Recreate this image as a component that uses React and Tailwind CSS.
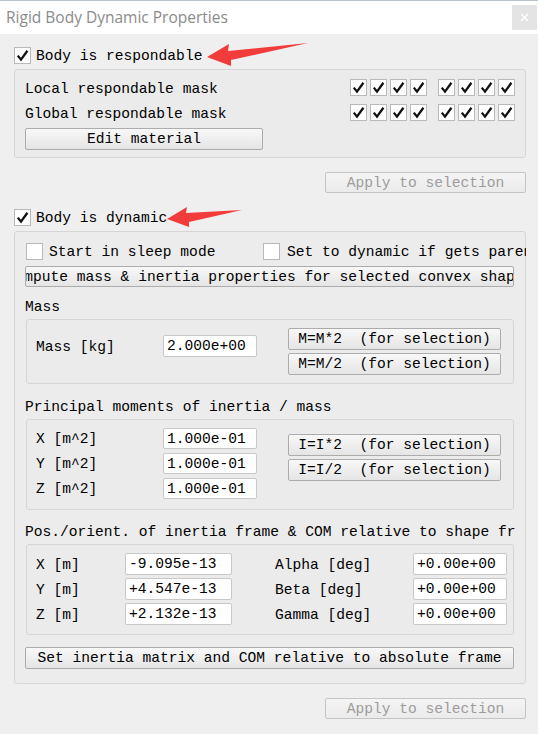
import React from "react";

function Check({ checked = true }) {
  return (
    <span className="w-[17px] h-[17px] bg-white border border-[#b9b9b9] flex items-center justify-center shrink-0">
      {checked && (
        <svg width="13" height="13" viewBox="0 0 13 13">
          <path d="M1.8 6.6 L5 10.6 L11.4 1.8" fill="none" stroke="#111" strokeWidth="2.3" strokeLinejoin="miter" strokeLinecap="butt" />
        </svg>
      )}
    </span>
  );
}

function Btn({ children, className = "", disabled = false }) {
  return (
    <div
      className={`border rounded-[2px] bg-gradient-to-b flex items-center justify-center overflow-hidden whitespace-pre pt-[1px] ${
        disabled
          ? "border-[#c4c4c4] from-[#f4f4f4] to-[#ebebeb] text-[#9c9c9c]"
          : "border-[#acacac] from-[#f8f8f8] to-[#e5e5e5] text-black"
      } ${className}`}
    >
      {children}
    </div>
  );
}

function Field({ value, className = "" }) {
  return (
    <div className={`bg-white border border-[#c8c8c8] rounded-[2px] pl-[3px] pt-[1px] flex items-center whitespace-nowrap shrink-0 ${className}`}>
      {value}
    </div>
  );
}

function Group({ children, className = "" }) {
  return <div className={`border border-[#d5d5d5] rounded-[3px] bg-[#ebebeb] ${className}`}>{children}</div>;
}

function Boxes() {
  return (
    <div className="flex shrink-0">
      <div className="flex gap-[3px]">
        <Check /><Check /><Check /><Check />
      </div>
      <div className="flex gap-[3px] ml-[11px]">
        <Check /><Check /><Check /><Check />
      </div>
    </div>
  );
}

export default function App() {
  return (
    <div className="relative w-[538px] h-[734px] overflow-hidden bg-[#efefef] text-black font-['Liberation_Mono',monospace] text-[14.6px] leading-none">
      {/* title bar */}
      <div className="h-[34px] bg-white border-t border-[#b7c3cf] flex items-start justify-between">
        <div className="pl-[6px] pt-[6px] font-['Open_Sans',sans-serif] text-[15.5px] leading-[20px] text-[#8b8b8b]">
          Rigid Body Dynamic Properties
        </div>
        <div className="mt-[4px] mr-[1px] w-[25px] h-[25px] bg-[#e4e4e4] flex items-center justify-center">
          <svg width="9" height="9" viewBox="0 0 9 9">
            <path d="M1 1 L8 8 M8 1 L1 8" stroke="#ffffff" strokeWidth="1.4" />
          </svg>
        </div>
      </div>

      <div className="pl-[14px] pr-[12px]">
        {/* Body is respondable */}
        <div className="mt-[13px] h-[17px] flex items-center gap-[5px]">
          <Check />
          <span className="pt-[2px]">Body is respondable</span>
        </div>

        <Group className="mt-[5px] pl-[10px] pr-[10px] pt-[9px] pb-[7px]">
          <div className="h-[17px] flex items-center">
            <span className="w-[325px] shrink-0 pt-[3px]">Local respondable mask</span>
            <Boxes />
          </div>
          <div className="mt-[8px] h-[17px] flex items-center">
            <span className="w-[325px] shrink-0 pt-[3px]">Global respondable mask</span>
            <Boxes />
          </div>
          <Btn className="mt-[7px] w-[238px] h-[22px]">Edit material</Btn>
        </Group>

        <div className="flex justify-end">
          <Btn disabled className="mt-[14px] w-[201px] h-[21px]">Apply to selection</Btn>
        </div>

        {/* Body is dynamic */}
        <div className="mt-[16px] h-[17px] flex items-center gap-[5px]">
          <Check />
          <span className="pt-[2px]">Body is dynamic</span>
        </div>

        <Group className="mt-[5px] pl-[10px] pr-[11px] pt-[11px] pb-[14px] bg-[#ececec]">
          <div className="ml-[1px] w-[500px] h-[17px] flex items-center whitespace-nowrap overflow-hidden">
            <div className="flex items-center gap-[6px] w-[237px] shrink-0">
              <Check checked={false} />
              <span className="pt-[2px]">Start in sleep mode</span>
            </div>
            <div className="flex items-center gap-[7px] shrink-0">
              <Check checked={false} />
              <span className="pt-[2px]">Set to dynamic if gets parent</span>
            </div>
          </div>

          <Btn className="mt-[6px] h-[21px]">Compute mass &amp; inertia properties for selected convex shapes</Btn>

          <div className="mt-[11px] h-[18px] flex items-center pt-[1px]">Mass</div>
          <Group className="mt-[3px] ml-[1px] pl-[9px] pt-[8px] pb-[8px] flex items-start">
            <div className="mt-[7px] flex items-center">
              <span className="w-[127px] pt-[3px]">Mass [kg]</span>
              <Field value="2.000e+00" className="w-[94px] h-[22px]" />
            </div>
            <div className="ml-[31px] flex flex-col gap-[3px]">
              <Btn className="w-[213px] h-[22px]">M=M*2  (for selection)</Btn>
              <Btn className="w-[213px] h-[22px]">M=M/2  (for selection)</Btn>
            </div>
          </Group>

          <div className="mt-[14px] h-[18px] flex items-center whitespace-nowrap pt-[1px]">Principal moments of inertia / mass</div>
          <Group className="mt-[3px] ml-[1px] pl-[9px] pt-[8px] pb-[10px] flex items-start">
            <div className="flex flex-col gap-[4px]">
              {["X", "Y", "Z"].map((k) => (
                <div key={k} className="flex items-center">
                  <span className="w-[127px] pt-[2px]">{k} [m^2]</span>
                  <Field value="1.000e-01" className="w-[94px] h-[21px]" />
                </div>
              ))}
            </div>
            <div className="ml-[31px] mt-[6px] flex flex-col gap-[3px]">
              <Btn className="w-[213px] h-[22px]">I=I*2  (for selection)</Btn>
              <Btn className="w-[213px] h-[22px]">I=I/2  (for selection)</Btn>
            </div>
          </Group>

          <div className="mt-[13px] w-[490px] h-[18px] flex items-center whitespace-nowrap overflow-hidden pt-[1px]">
            <span className="shrink-0">Pos./orient. of inertia frame &amp; COM relative to shape frame</span>
          </div>
          <Group className="mt-[3px] ml-[1px] pl-[9px] pt-[8px] pb-[9px] flex flex-col gap-[3px]">
            {[
              ["X [m]", "-9.095e-13", "Alpha [deg]", "+0.00e+00"],
              ["Y [m]", "+4.547e-13", "Beta [deg]", "+0.00e+00"],
              ["Z [m]", "+2.132e-13", "Gamma [deg]", "+0.00e+00"],
            ].map(([a, b, c, d]) => (
              <div key={a} className="flex items-center">
                <span className="w-[89px] pt-[2px]">{a}</span>
                <Field value={b} className="w-[107px] h-[22px]" />
                <span className="ml-[43px] w-[138px] pt-[2px]">{c}</span>
                <Field value={d} className="w-[94px] h-[22px]" />
              </div>
            ))}
          </Group>

          <Btn className="mt-[12px] h-[22px]">Set inertia matrix and COM relative to absolute frame</Btn>
        </Group>

        <div className="flex justify-end">
          <Btn disabled className="mt-[14px] w-[201px] h-[21px]">Apply to selection</Btn>
        </div>
      </div>

      {/* red annotation arrows */}
      <svg className="absolute left-0 top-0 pointer-events-none" width="538" height="734" viewBox="0 0 538 734">
        <polygon points="207,57 229,44 228,51 308,43 231,60 231,66" fill="#f23b3b" />
        <polygon points="167,219 187,207 186,213 242,210 189,222 189,227" fill="#f23b3b" />
      </svg>
    </div>
  );
}
